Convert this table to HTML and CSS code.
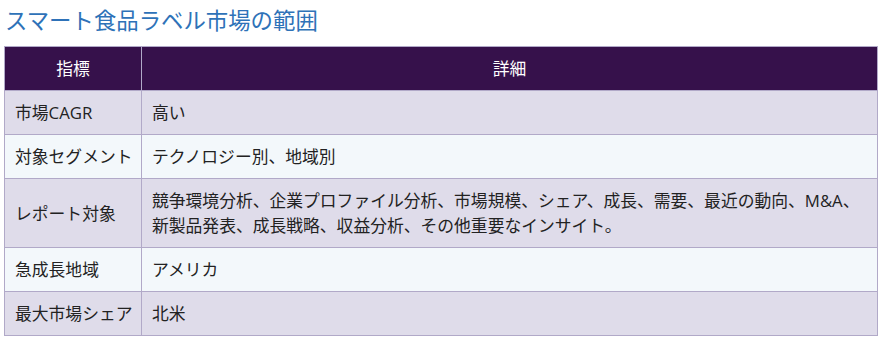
FILE: index.html
```html
<!DOCTYPE html>
<html lang="ja">
<head>
<meta charset="utf-8">
<title>スマート食品ラベル市場の範囲</title>
<link rel="stylesheet" href="styles.css">
</head>
<body>
<h2 class="title">スマート食品ラベル市場の範囲</h2>
<table class="scope">
  <colgroup><col class="c1"><col class="c2"></colgroup>
  <thead>
    <tr><th>指標</th><th>詳細</th></tr>
  </thead>
  <tbody>
    <tr><td class="key">市場CAGR</td><td>高い</td></tr>
    <tr><td class="key">対象セグメント</td><td>テクノロジー別、地域別</td></tr>
    <tr><td class="key">レポート対象</td><td>競争環境分析、企業プロファイル分析、市場規模、シェア、成長、需要、最近の動向、M&amp;A、新製品発表、成長戦略、収益分析、その他重要なインサイト。</td></tr>
    <tr><td class="key">急成長地域</td><td>アメリカ</td></tr>
    <tr><td class="key">最大市場シェア</td><td>北米</td></tr>
  </tbody>
</table>
</body>
</html>
```

FILE: styles.css
```css
html, body {
  margin: 0;
  padding: 0;
  background: #ffffff;
}
body {
  padding: 0 4px;
  font-family: "Open Sans", "Noto Sans CJK JP", sans-serif;
  color: #222222;
}
.title {
  margin: 0 0 10px 1px;
  padding-top: 6px;
  font-size: 22.4px;
  line-height: 30px;
  font-weight: 400;
  color: #2e72b8;
}
.scope {
  width: 874px;
  border-collapse: collapse;
  table-layout: fixed;
  font-size: 16.8px;
  line-height: 25px;
}
.scope .c1 { width: 137px; }
.scope th, .scope td {
  border: 1px solid #b1a9c8;
  padding: 9px 6px 9px 10px;
  vertical-align: middle;
}
.scope th {
  background: #36114b;
  color: #ffffff;
  font-weight: 400;
  text-align: center;
  padding-right: 10px;
}
.scope td {
  text-align: left;
}
.scope td.key {
  white-space: nowrap;
  padding-right: 2px;
}
.scope tbody tr:nth-child(odd) td { background: #dfdcea; }
.scope tbody tr:nth-child(even) td { background: #f3f8fb; }
```
